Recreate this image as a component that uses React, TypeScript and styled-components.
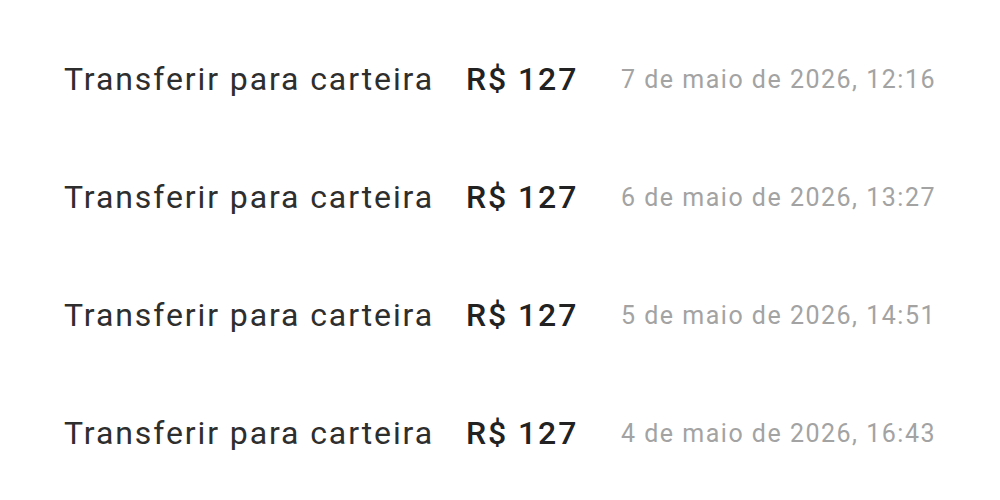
import React from "react";
import styled, { createGlobalStyle } from "styled-components";

const GlobalStyle = createGlobalStyle`
  body {
    margin: 0;
    background: #ffffff;
    font-family: Roboto, "Noto Sans", sans-serif;
  }
`;

const Page = styled.div`
  width: 1000px;
  height: 500px;
  display: flex;
  justify-content: center;
  padding-top: 20px;
  box-sizing: border-box;
`;

const List = styled.div`
  display: grid;
  grid-template-columns: auto auto 1fr;
  grid-auto-rows: 118px;
  column-gap: 32px;
  align-items: center;
  width: 872px;
`;

const Label = styled.div`
  font-size: 32px;
  letter-spacing: 1.9px;
  color: #2e2e2e;
`;

const Amount = styled.div`
  font-size: 32px;
  font-weight: 500;
  letter-spacing: 1.9px;
  color: #222222;
`;

const Date = styled.div`
  font-size: 25px;
  letter-spacing: 1.5px;
  color: #a3a3a3;
  text-align: right;
`;

const rows = [
  "7 de maio de 2026, 12:16",
  "6 de maio de 2026, 13:27",
  "5 de maio de 2026, 14:51",
  "4 de maio de 2026, 16:43",
];

export default function App() {
  return (
    <>
      <GlobalStyle />
      <Page>
        <List>
          {rows.map((d) => (
            <React.Fragment key={d}>
              <Label>Transferir para carteira</Label>
              <Amount>R$ 127</Amount>
              <Date>{d}</Date>
            </React.Fragment>
          ))}
        </List>
      </Page>
    </>
  );
}
